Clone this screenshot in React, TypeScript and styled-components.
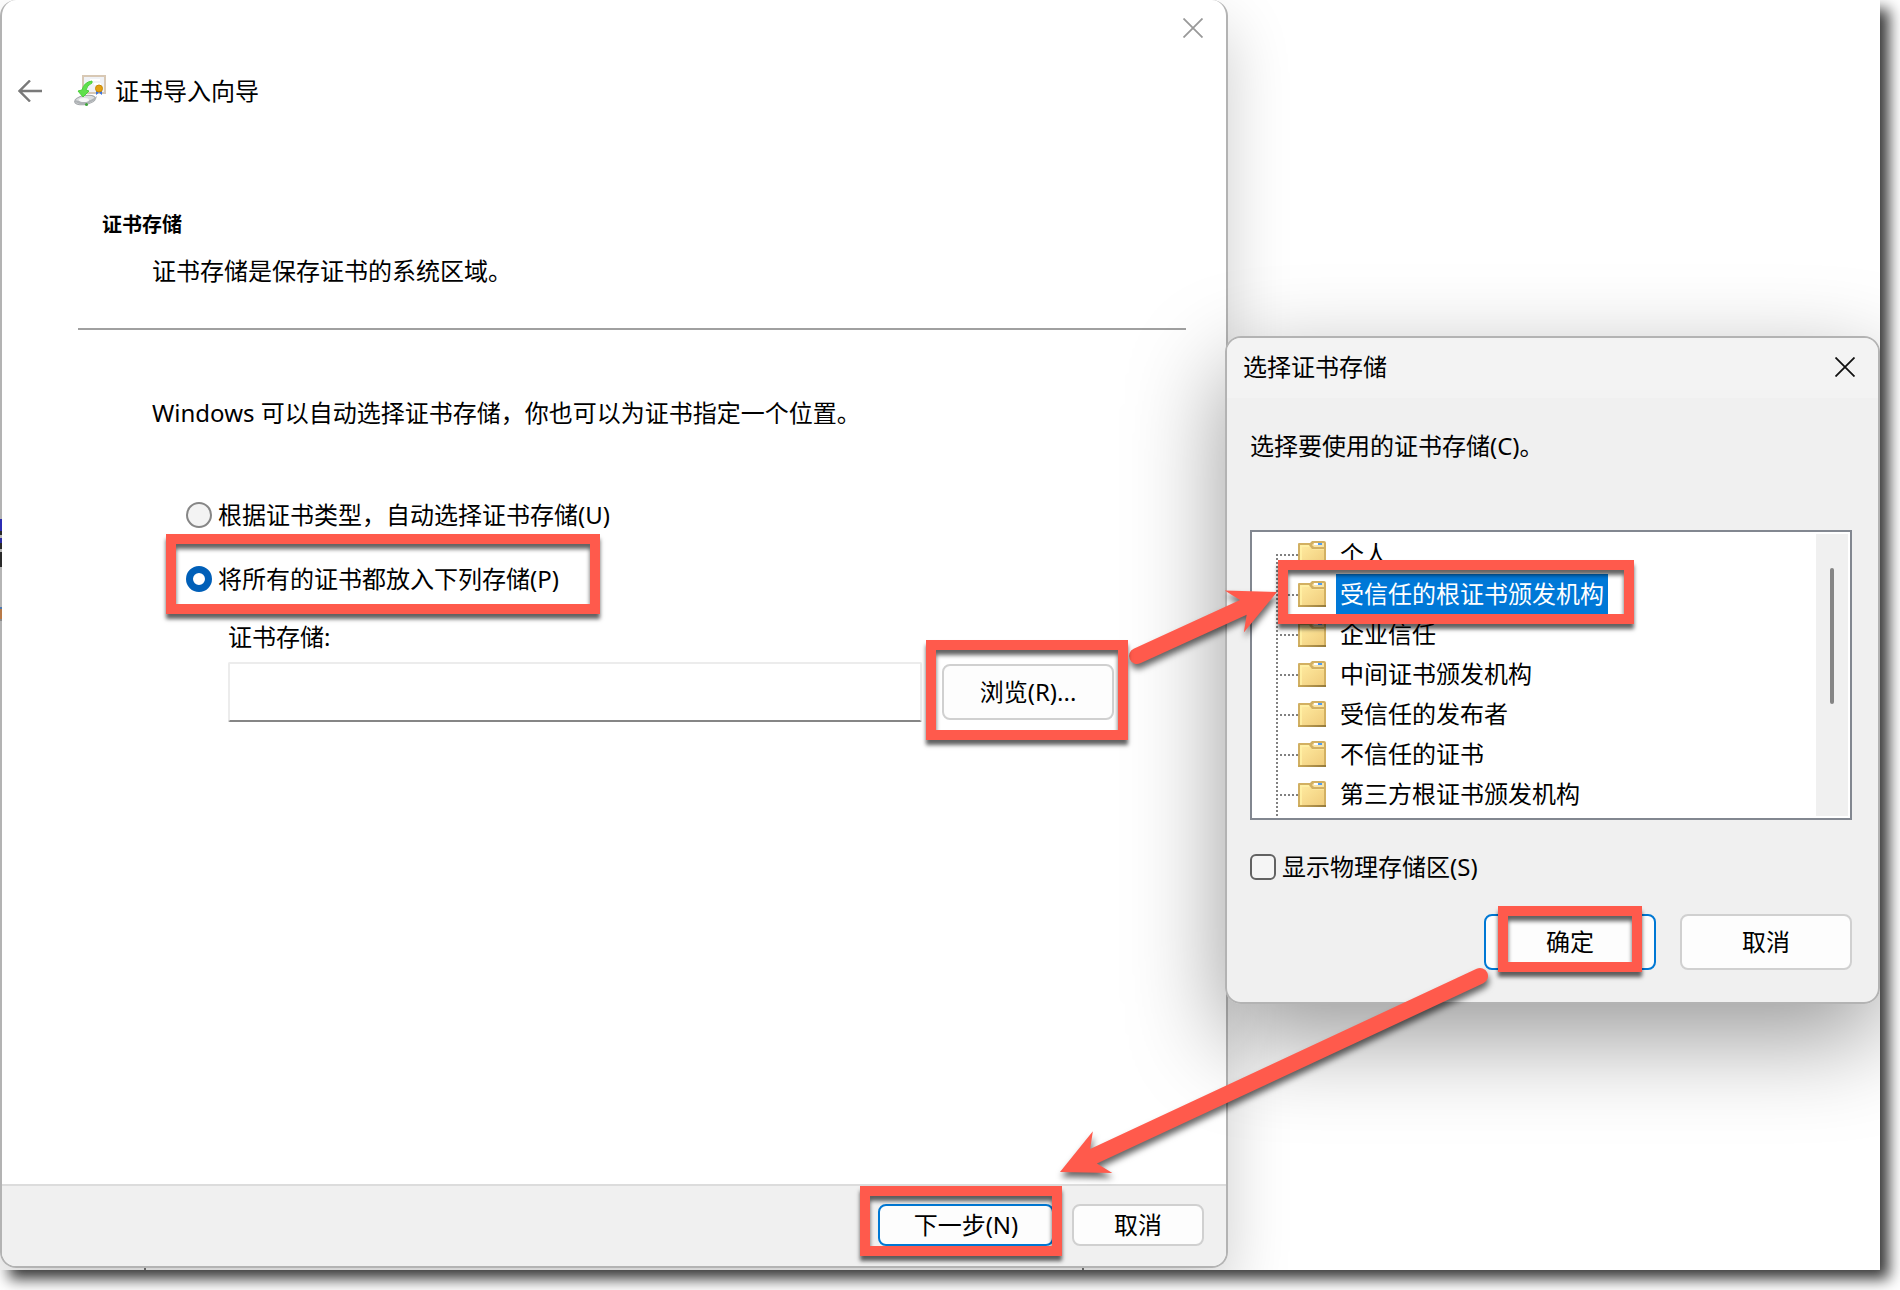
import React, { useState } from "react";
import styled, { createGlobalStyle, css } from "styled-components";

const RED = "#ff5a4c";

const GlobalStyle = createGlobalStyle`
  * { box-sizing: border-box; }
  html, body { margin: 0; background: #fff; }
  body {
    overflow: hidden;
    font-family: "Noto Sans", "Noto Sans CJK SC", sans-serif;
    font-size: 24px;
    line-height: 32px;
    color: #000;
  }
  button, input { font: inherit; color: inherit; margin: 0; }
  h1, h2, p, ul { margin: 0; padding: 0; }
`;

/* ---------- desktop ---------- */

const Desktop = styled.main`
  position: relative;
  display: flex;
  overflow: hidden;
  min-height: calc(100vh - 20px);
  background: #fff;
`;

const Frame = styled.div`
  margin: 0 20px 20px 0;
  box-shadow: 9px 9px 14px rgba(0, 0, 0, 0.78);
`;

const BackWindow = styled.div`
  position: absolute;
  left: 144px;
  top: 100px;
  bottom: 0;
  width: 940px;
  border: solid #777;
  border-width: 0 2px;
`;

const EdgePeek = styled.div`
  position: absolute;
  left: 0;
  top: 519px;
  width: 2px;
  height: 102px;
  background: linear-gradient(
    #2c2cb4 0 12px, #2a2a2a 12px 16px, #b5b5b5 16px 19px, #2c2ca0 19px 24px,
    #2a2a2a 24px 30px, #b5b5b5 30px 33px, #2a2a2a 33px 48px,
    #b5b5b5 48px 88px, #4d79b0 88px 90px, #b87a48 90px 100px, #8a8a8a 100px
  );
`;

const Win = styled.section`
  display: flex;
  flex-direction: column;
  overflow: hidden;
  border: 2px solid #b3b3b3;
  border-radius: 16px;
`;

const WinShadow = styled.div<{ $active?: boolean }>`
  display: flex;
  flex-direction: column;
  border-radius: 16px;
  ${(p) =>
    p.$active
      ? css`
          position: absolute;
          left: 1225px;
          top: 336px;
          width: 655px;
          box-shadow: 0 34px 96px rgba(0, 0, 0, 0.4);
        `
      : css`
          position: relative;
          flex: 0 0 1228px;
          margin-bottom: 2px;
          box-shadow: 0 28px 64px rgba(0, 0, 0, 0.2);
        `}
`;

const WizardWin = styled(Win)`
  flex: 1;
  border-top-width: 0;
  background: #fff;
`;

const DialogWin = styled(Win)`
  background: #f0f0f0;
`;

/* ---------- shared controls ---------- */

const Spot = styled.div`
  position: relative;
  display: flex;
`;

const Highlight = styled.span<{ $inset: string }>`
  position: absolute;
  inset: ${(p) => p.$inset};
  z-index: 2;
  pointer-events: none;
  border: 10px solid ${RED};
  box-shadow: 0 5px 4px rgba(0, 0, 0, 0.62), inset 0 5px 4px rgba(0, 0, 0, 0.62);
`;

const PushButton = styled.button<{ $w: number; $h: number; $primary?: boolean }>`
  width: ${(p) => p.$w}px;
  height: ${(p) => p.$h}px;
  padding: 0;
  border: 2px solid ${(p) => (p.$primary ? "#0078d4" : "#d0d0d0")};
  border-radius: 8px;
  background: #fdfdfd;
`;

const IconButton = styled.button`
  display: flex;
  padding: 0;
  border: 0;
  background: none;
`;

const CloseIcon = ({ color }: { color: string }) => (
  <svg width="20" height="20" viewBox="0 0 20 20" stroke={color} strokeWidth="1.8" fill="none">
    <path d="M0.5 0.5L19.5 19.5M19.5 0.5L0.5 19.5" />
  </svg>
);

/* ---------- wizard ---------- */

const WizardTitleBar = styled.div`
  display: flex;
  align-items: center;
  justify-content: flex-end;
  height: 56px;
  padding-right: 23px;
`;

const WizardHeader = styled.header`
  display: flex;
  align-items: center;
  height: 70px;
  padding-left: 16px;
`;

const WizardIcon = styled.span`
  display: flex;
  margin: 0 9px 0 32px;
`;

const WizardTitle = styled.h1`
  font-size: 24px;
  font-weight: 400;
`;

const WizardBody = styled.div`
  flex: 1;
  padding: 85px 40px 0 76px;
`;

const Heading = styled.h2`
  padding-left: 24px;
  font-size: 20px;
  line-height: 28px;
  font-weight: 700;
`;

const Paragraph = styled.p<{ $top: number }>`
  margin-top: ${(p) => p.$top}px;
  padding-left: 74px;
`;

const Divider = styled.hr`
  height: 2px;
  margin: 41px 0 0;
  border: 0;
  background: #a0a0a0;
`;

const Options = styled.div`
  display: flex;
  flex-direction: column;
  align-items: flex-start;
  gap: 32px;
  margin: 70px 0 0 108px;
`;

const Option = styled.label`
  display: flex;
  align-items: center;
  gap: 6px;
`;

const Radio = styled.input.attrs({ type: "radio" })`
  appearance: none;
  width: 26px;
  height: 26px;
  border: 2px solid #868686;
  border-radius: 50%;
  background: #f3f3f3;
  &:checked {
    border: 7px solid #005fb8;
    background: #fff;
  }
`;

const Field = styled.div`
  display: flex;
  flex-direction: column;
  gap: 9px;
  margin: 26px 72px 0 150px;
`;

const FieldRow = styled.div`
  display: flex;
  align-items: center;
  gap: 20px;
`;

const TextBox = styled.input.attrs({ type: "text" })`
  flex: 1;
  min-width: 0;
  height: 60px;
  padding: 0 12px;
  border: 2px solid #ececec;
  border-bottom-color: #868686;
  border-radius: 2px;
  background: #fff;
`;

const WizardFooter = styled.footer`
  display: flex;
  justify-content: flex-end;
  gap: 18px;
  height: 82px;
  padding: 18px 22px 0;
  border-top: 2px solid #dcdcdc;
  background: #f0f0f0;
`;

/* ---------- store dialog ---------- */

const DialogTitleBar = styled.header`
  display: flex;
  align-items: center;
  justify-content: space-between;
  height: 60px;
  padding: 0 23px 2px 16px;
  background: #f3f3f3;
`;

const DialogTitle = styled.h2`
  font-size: 24px;
  font-weight: 400;
`;

const DialogBody = styled.div`
  display: flex;
  flex-direction: column;
  padding: 32px 26px 32px 23px;
`;

const Tree = styled.div`
  display: flex;
  height: 290px;
  margin: 68px 0 31px;
  padding: 2px;
  border: 2px solid #828790;
  background: #fff;
`;

const TreeList = styled.ul`
  flex: 1;
  list-style: none;
`;

const TreeRow = styled.li<{ $first: boolean; $last: boolean }>`
  position: relative;
  display: flex;
  align-items: center;
  height: 40px;
  padding-left: 44px;
  gap: 10px;
  &::before {
    content: "";
    position: absolute;
    left: 22px;
    top: ${(p) => (p.$first ? 20 : 0)}px;
    height: ${(p) => (p.$first ? 20 : p.$last ? 42 : 40)}px;
    width: 2px;
    background: repeating-linear-gradient(#808080 0 2px, transparent 2px 4px);
  }
  &::after {
    content: "";
    position: absolute;
    left: 22px;
    top: 20px;
    width: 22px;
    height: 2px;
    background: repeating-linear-gradient(90deg, #808080 0 2px, transparent 2px 4px);
  }
`;

const TreeLabel = styled.button<{ $selected: boolean }>`
  height: 40px;
  padding: 0 4px;
  border: 0;
  background: ${(p) => (p.$selected ? "#0078d7" : "transparent")};
  color: ${(p) => (p.$selected ? "#fff" : "#000")};
`;

const ScrollTrack = styled.div`
  width: 32px;
  padding: 34px 0 0 14px;
  background: #f0f0f0;
`;

const ScrollThumb = styled.div`
  width: 4px;
  height: 136px;
  border-radius: 2px;
  background: #858585;
`;

const CheckBox = styled.input.attrs({ type: "checkbox" })`
  appearance: none;
  width: 26px;
  height: 26px;
  border: 2px solid #626262;
  border-radius: 6px;
  background: #f5f5f5;
  &:checked {
    background: #005fb8;
  }
`;

const DialogButtons = styled.div`
  display: flex;
  justify-content: flex-end;
  gap: 24px;
  margin-top: 31px;
`;

const FolderIcon = () => (
  <svg width="28" height="26" viewBox="0 0 28 26">
    <defs>
      <linearGradient id="folder" x1="0" y1="0" x2="1" y2="1">
        <stop offset="0" stopColor="#ffeba0" />
        <stop offset="1" stopColor="#f0cc7c" />
      </linearGradient>
      <linearGradient id="folder-base" x1="0" y1="0" x2="1" y2="0">
        <stop offset="0" stopColor="#cba958" />
        <stop offset="1" stopColor="#94793c" />
      </linearGradient>
    </defs>
    <path d="M0 3Q0 2 1 2H12L14 0H26Q28 0 28 2V26H0Z" fill="#d2b062" />
    <path d="M2 4H11L14 8H26V24H2Z" fill="url(#folder)" />
    <path d="M3 24V5H11" fill="none" stroke="#fff2a6" strokeWidth="1.500" />
    <path d="M14 8.500H26" stroke="#fbe6a0" />
    <path d="M14 4L16 2H26V6H16Z" fill="#f7e3a8" />
    <rect x="16" y="2" width="4" height="2" fill="#fff" />
    <rect x="20" y="2" width="4" height="2" fill="#4f9df2" />
    <rect y="24" width="28" height="2" fill="url(#folder-base)" />
  </svg>
);

const CertificateIcon = () => (
  <svg width="32" height="32" viewBox="0 0 32 32">
    <rect x="9" y="1" width="22" height="17" fill="#f0f2f6" stroke="#d8c8b4" strokeWidth="2" />
    <path d="M16 5H26M20 9H27" stroke="#fff" strokeWidth="2" />
    <ellipse cx="11" cy="25" rx="10.500" ry="4.500" transform="rotate(-10 11 25)" fill="#dcdedf" stroke="#a4a8ab" />
    <path d="M1 27Q10 33 22 24L23 21Q14 29 1 25Z" fill="#aeb2b5" />
    <ellipse cx="10" cy="25" rx="5" ry="2" fill="#f7f8f8" />
    <path d="M18 6Q10 7 8 15L4 16L9 22L15 16L12 15Q13 10 18 8Z" fill="#5fe04c" stroke="#4bcf3b" />
    <path d="M22 16V20L24 18.500L25 17L26 18.500L28 20V16Z" fill="#3b74e0" />
    <circle cx="25" cy="13.500" r="3.500" fill="#e3a012" stroke="#c98705" />
    <circle cx="12.500" cy="29.500" r="1.500" fill="#3da53a" />
  </svg>
);

/* ---------- arrows ---------- */

const ArrowLayer = styled.svg`
  position: absolute;
  left: 0;
  top: 0;
  width: 1880px;
  height: 1270px;
  pointer-events: none;
  filter: drop-shadow(1px 5px 3px rgba(0, 0, 0, 0.6));
`;

function Arrow({ from, to }: { from: [number, number]; to: [number, number] }) {
  const dx = to[0] - from[0];
  const dy = to[1] - from[1];
  const len = Math.hypot(dx, dy);
  const angle = (Math.atan2(dy, dx) * 180) / Math.PI;
  const neck = len - 37;
  const barb = len - 47;
  return (
    <path
      fill={RED}
      transform={`translate(${from[0]} ${from[1]}) rotate(${angle})`}
      d={`M0 -8H${neck}L${barb} -23L${len} 0L${barb} 23L${neck} 8H0A8 8 0 0 1 0 -8Z`}
    />
  );
}

const STORES = [
  "个人",
  "受信任的根证书颁发机构",
  "企业信任",
  "中间证书颁发机构",
  "受信任的发布者",
  "不信任的证书",
  "第三方根证书颁发机构",
];

export default function App() {
  const [mode, setMode] = useState("manual");
  const [store, setStore] = useState(1);
  const [path, setPath] = useState("");

  return (
    <>
      <GlobalStyle />
      <Frame>
        <Desktop>
          <BackWindow />
          <WinShadow>
            <WizardWin>
              <WizardTitleBar>
                <IconButton aria-label="关闭">
                  <CloseIcon color="#999" />
                </IconButton>
              </WizardTitleBar>
              <WizardHeader>
                <IconButton aria-label="返回">
                  <svg width="24" height="22" viewBox="0 0 24 22" fill="none" stroke="#7a7a7a" strokeWidth="2.400">
                    <path d="M24 11H1.500M12 0.500L1.500 11L12 21.500" />
                  </svg>
                </IconButton>
                <WizardIcon>
                  <CertificateIcon />
                </WizardIcon>
                <WizardTitle>证书导入向导</WizardTitle>
              </WizardHeader>
              <WizardBody>
                <Heading>证书存储</Heading>
                <Paragraph $top={16}>证书存储是保存证书的系统区域。</Paragraph>
                <Divider />
                <Paragraph $top={67}>Windows 可以自动选择证书存储，你也可以为证书指定一个位置。</Paragraph>
                <Options>
                  <Option>
                    <Radio name="mode" checked={mode === "auto"} onChange={() => setMode("auto")} />
                    根据证书类型，自动选择证书存储(U)
                  </Option>
                  <Spot>
                    <Option>
                      <Radio name="mode" checked={mode === "manual"} onChange={() => setMode("manual")} />
                      将所有的证书都放入下列存储(P)
                    </Option>
                    <Highlight $inset="-29px -41px -19px -20px" />
                  </Spot>
                </Options>
                <Field>
                  <label htmlFor="store-path">证书存储:</label>
                  <FieldRow>
                    <TextBox id="store-path" value={path} onChange={(e) => setPath(e.target.value)} />
                    <Spot>
                      <PushButton $w={172} $h={56}>浏览(R)...</PushButton>
                      <Highlight $inset="-24px -14px -20px -16px" />
                    </Spot>
                  </FieldRow>
                </Field>
              </WizardBody>
              <WizardFooter>
                <Spot>
                  <PushButton $w={176} $h={42} $primary>下一步(N)</PushButton>
                  <Highlight $inset="-18px -8px 10px -18px" />
                </Spot>
                <PushButton $w={132} $h={42}>取消</PushButton>
              </WizardFooter>
            </WizardWin>
            <EdgePeek />
          </WinShadow>

          <WinShadow $active>
            <DialogWin>
              <DialogTitleBar>
                <DialogTitle>选择证书存储</DialogTitle>
                <IconButton aria-label="关闭">
                  <CloseIcon color="#111" />
                </IconButton>
              </DialogTitleBar>
              <DialogBody>
                <p>选择要使用的证书存储(C)。</p>
                <Tree>
                  <TreeList>
                    {STORES.map((name, i) => (
                      <TreeRow key={name} $first={i === 0} $last={i === STORES.length - 1}>
                        <FolderIcon />
                        <TreeLabel $selected={i === store} onClick={() => setStore(i)}>
                          {name}
                        </TreeLabel>
                        {i === 1 && <Highlight $inset="-14px 182px -10px 24px" />}
                      </TreeRow>
                    ))}
                  </TreeList>
                  <ScrollTrack>
                    <ScrollThumb />
                  </ScrollTrack>
                </Tree>
                <Option>
                  <CheckBox />
                  显示物理存储区(S)
                </Option>
                <DialogButtons>
                  <Spot>
                    <PushButton $w={172} $h={56} $primary>确定</PushButton>
                    <Highlight $inset="-8px 14px -2px 14px" />
                  </Spot>
                  <PushButton $w={172} $h={56}>取消</PushButton>
                </DialogButtons>
              </DialogBody>
            </DialogWin>
          </WinShadow>

          <ArrowLayer aria-hidden="true">
            <Arrow from={[1137, 656]} to={[1277, 592]} />
            <Arrow from={[1480, 976]} to={[1060, 1172]} />
          </ArrowLayer>
        </Desktop>
      </Frame>
    </>
  );
}
